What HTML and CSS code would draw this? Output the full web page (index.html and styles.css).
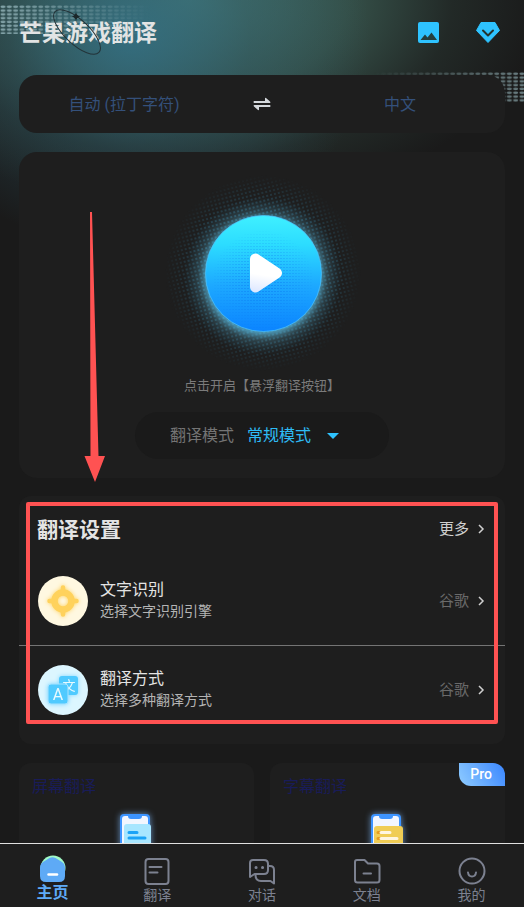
FILE: index.html
```
<!DOCTYPE html>
<html lang="zh-CN">
<head>
    <meta charset="UTF-8">
    <meta name="viewport" content="width=device-width, initial-scale=1.0">
    <link rel="stylesheet" href="styles.css">
    <title>芒果游戏翻译</title>
</head>
<body>
<div class="app">

    <main class="content">
        <!-- halftone decoration -->
        <svg class="dots dots-left" width="150" height="30" aria-hidden="true">
            <defs>
                <pattern id="dot" width="6.3" height="3.8" patternUnits="userSpaceOnUse">
                    <ellipse cx="3" cy="1.7" rx="2.6" ry="1.3" fill="#9fc0c6"/>
                </pattern>
                <linearGradient id="fadeL"><stop offset="0" stop-color="#fff" stop-opacity=".75"/><stop offset="1" stop-color="#fff" stop-opacity="0"/></linearGradient>
                <linearGradient id="fadeR"><stop offset="0" stop-color="#fff" stop-opacity="0"/><stop offset="1" stop-color="#fff" stop-opacity=".6"/></linearGradient>
                <mask id="maskL"><rect width="150" height="30" fill="url(#fadeL)"/></mask>
                <mask id="maskR"><rect width="150" height="30" fill="url(#fadeR)"/></mask>
            </defs>
            <rect width="150" height="29" fill="url(#dot)" mask="url(#maskL)"/>
        </svg>
        <svg class="dots dots-right" width="150" height="30" aria-hidden="true">
            <rect width="150" height="30" fill="url(#dot)" mask="url(#maskR)"/>
        </svg>

        <header class="header">
            <h1>芒果游戏翻译</h1>
            <svg class="orbit" width="60" height="56" viewBox="0 0 60 56" aria-hidden="true">
                <ellipse cx="27" cy="32" rx="30" ry="12" transform="rotate(43 27 32)" fill="none" stroke="#233338"/>
                <path d="M26 12q.6 3.700 4.500 4.500q-3.900.7-4.500 4.500q-.6-3.800-4.500-4.500q3.900-.8 4.500-4.500z" fill="#1b2629"/>
            </svg>
            <div class="actions">
                <button type="button" aria-label="图片翻译">
                    <svg width="21" height="21" viewBox="0 0 21 21">
                        <rect width="21" height="21" rx="2" fill="#2ec3ff"/>
                        <path d="M2.500 18l4.500-5.500 2.500 3 4-5L19 18z" fill="#24403f"/>
                    </svg>
                </button>
                <button type="button" aria-label="会员">
                    <svg width="24" height="21" viewBox="0 0 24 21">
                        <path d="M5 0.500h14L23.500 8.500 12 20.500.500 8.500z" fill="#2ec3ff" stroke="#2ec3ff" stroke-linejoin="round"/>
                        <path d="M7 8.500l5 5 5-5" fill="none" stroke="#24332f" stroke-width="2" stroke-linecap="round" stroke-linejoin="round"/>
                    </svg>
                </button>
            </div>
        </header>

        <section class="languages">
            <button type="button" class="lang">自动 (拉丁字符)</button>
            <button type="button" class="swap" aria-label="交换语言">
                <svg width="18" height="14" viewBox="0 0 18 14" fill="#d4d8dc">
                    <path d="M1 4h11V1.500Q12 .500 13 1l4 3.500q1 1.500-.5 1.500H1q-1-1 0-2zM17 10H6v2.500q0 1-1 .5L1 9.500Q0 8 1.500 8H17q1 1 0 2z"/>
                </svg>
            </button>
            <button type="button" class="lang">中文</button>
        </section>

        <section class="card player">
            <button type="button" class="play" aria-label="开启悬浮翻译">
                <svg width="204" height="204" viewBox="0 0 204 204">
                    <defs>
                        <linearGradient id="ball" x2="0" y2="1">
                            <stop offset="0" stop-color="#3ff0ff"/>
                            <stop offset=".25" stop-color="#2cdcff"/>
                            <stop offset=".6" stop-color="#1da9ff"/>
                            <stop offset="1" stop-color="#0b84ff"/>
                        </linearGradient>
                        <linearGradient id="tri" gradientUnits="userSpaceOnUse" x1="100" y1="84" x2="94" y2="122">
                            <stop offset=".5" stop-color="#fff"/>
                            <stop offset="1" stop-color="#dbe6ff"/>
                        </linearGradient>
                        <radialGradient id="glow">
                            <stop offset=".72" stop-color="#57b4d8" stop-opacity=".75"/>
                            <stop offset=".82" stop-color="#4d8ca3" stop-opacity=".32"/>
                            <stop offset="1" stop-color="#2b6178" stop-opacity="0"/>
                        </radialGradient>
                        <radialGradient id="halo">
                            <stop offset=".58" stop-color="#fff" stop-opacity=".85"/>
                            <stop offset=".75" stop-color="#fff" stop-opacity=".45"/>
                            <stop offset="1" stop-color="#fff" stop-opacity="0"/>
                        </radialGradient>
                        <radialGradient id="core">
                            <stop offset="0" stop-color="#fff"/>
                            <stop offset="1" stop-color="#fff" stop-opacity="0"/>
                        </radialGradient>
                        <pattern id="haloDot" width="4" height="4" patternUnits="userSpaceOnUse" patternTransform="rotate(-14)">
                            <circle cx="2" cy="2" r="1" fill="#34728f"/>
                        </pattern>
                        <pattern id="ballDot" width="3" height="3" patternUnits="userSpaceOnUse">
                            <rect width="2" height="1" fill="#0a76f0"/>
                        </pattern>
                        <mask id="haloMask"><circle cx="103" cy="102" r="98" fill="url(#halo)"/></mask>
                        <mask id="coreMask"><circle cx="103" cy="112" r="54" fill="url(#core)"/></mask>
                    </defs>
                    <circle cx="103" cy="102" r="98" fill="url(#haloDot)" mask="url(#haloMask)"/>
                    <circle cx="103" cy="105" r="79" fill="url(#glow)"/>
                    <circle cx="103.500" cy="102.500" r="58" fill="url(#ball)" stroke="#4cc3ff" stroke-opacity=".7"/>
                    <circle cx="103" cy="110" r="50" fill="url(#ballDot)" mask="url(#coreMask)" opacity=".6"/>
                    <path d="M95.500 88L116.500 102L95.500 116z" fill="url(#tri)" stroke="url(#tri)" stroke-width="11" stroke-linejoin="round"/>
                </svg>
            </button>
            <p class="hint">点击开启【悬浮翻译按钮】</p>
            <div class="mode">
                <label for="mode">翻译模式</label>
                <select id="mode">
                    <option>常规模式</option>
                </select>
                <svg width="12" height="6" viewBox="0 0 12 6" aria-hidden="true"><path d="M0 0h12L6 6z" fill="#2ec3ff"/></svg>
            </div>
            <svg class="arrow" width="22" height="270" viewBox="0 0 22 270" aria-hidden="true">
                <path d="M6 0h2L14.500 244H21L11 270 .500 244H6.500z" fill="#ff5252"/>
            </svg>
        </section>

        <section class="card settings">
            <div class="settings-head">
                <h2>翻译设置</h2>
                <a href="#more" class="more">更多
                    <svg class="chevron" viewBox="0 0 6 10"><path d="M1 1l4 4-4 4"/></svg>
                </a>
            </div>
            <a href="#ocr" class="row">
                <svg class="row-icon" viewBox="0 0 50 50">
                    <circle cx="25" cy="25" r="25" fill="#fff8e1"/>
                    <g class="soft-yellow">
                        <circle cx="25" cy="25" r="8.500" fill="none" stroke="#ffd25c" stroke-width="6.500"/>
                        <path d="M25 11.500v3M25 35.500v3M11.500 25h3M35.500 25h3" stroke="#ffd25c" stroke-width="4.500" stroke-linecap="round"/>
                    </g>
                </svg>
                <span class="row-text">
                    <strong>文字识别</strong>
                    <small>选择文字识别引擎</small>
                </span>
                <span class="value">谷歌</span>
                <svg class="chevron" viewBox="0 0 6 10"><path d="M1 1l4 4-4 4"/></svg>
            </a>
            <a href="#engine" class="row">
                <svg class="row-icon" viewBox="0 0 50 50">
                    <circle cx="25" cy="25" r="25" fill="#dcf6ff"/>
                    <g class="soft-blue">
                        <rect x="21" y="11" width="19" height="19" rx="3" fill="#4fcaff"/>
                        <text x="31" y="25" class="glyph-cn">文</text>
                        <rect x="10" y="19" width="20" height="20" rx="3" fill="#4fcaff" stroke="#a9e3ff"/>
                        <text x="20" y="35" class="glyph-a">A</text>
                    </g>
                </svg>
                <span class="row-text">
                    <strong>翻译方式</strong>
                    <small>选择多种翻译方式</small>
                </span>
                <span class="value">谷歌</span>
                <svg class="chevron" viewBox="0 0 6 10"><path d="M1 1l4 4-4 4"/></svg>
            </a>
            <div class="highlight"></div>
        </section>

        <section class="features">
            <a href="#screen" class="card feature">
                <h3>屏幕翻译</h3>
                <svg class="phone" width="38" height="60" viewBox="0 0 38 60">
                    <rect x="2" y="1" width="30" height="58" rx="4" fill="#3d94ff"/>
                    <path d="M4 6q0-3 3-3h3q0 3 3 3h8q3 0 3-3h3q3 0 3 3v50H4z" fill="#f2f6ff"/>
                    <rect x="6" y="11" width="27" height="40" rx="3" fill="#a8e6ff"/>
                    <path d="M11 19.500h8M11 25h16" stroke="#1ba3f7" stroke-width="3" stroke-linecap="round"/>
                </svg>
            </a>
            <a href="#subtitle" class="card feature">
                <h3>字幕翻译</h3>
                <span class="badge">Pro</span>
                <svg class="phone" width="38" height="60" viewBox="0 0 38 60">
                    <rect x="2" y="1" width="30" height="58" rx="4" fill="#3d94ff"/>
                    <path d="M4 6q0-3 3-3h3q0 3 3 3h8q3 0 3-3h3q3 0 3 3v50H4z" fill="#f2f6ff"/>
                    <rect x="5" y="13" width="29" height="40" rx="3" fill="#f0cd55"/>
                    <path d="M9 19.500h3M9 25.500h3" stroke="#e59c1c" stroke-width="3" stroke-linecap="round"/>
                    <path d="M12 19.500h9M12 25.500h16" stroke="#fff6e0" stroke-width="3" stroke-linecap="round"/>
                </svg>
            </a>
        </section>
    </main>

    <nav class="tabs">
        <a href="#home" class="tab active">
            <svg width="28" height="28" viewBox="0 0 28 28">
                <circle cx="15" cy="13" r="12.500" fill="#a2fbc7"/>
                <path d="M2 13q0-4 3-6l6.500-4q3-1.500 6 0L24 7q3 2 3 6v8q0 6-6 6H8q-6 0-6-6z" fill="#5eaaf6"/>
                <path d="M10.500 19.500h8.500" stroke="#fff" stroke-width="2.500" stroke-linecap="round"/>
            </svg>
            主页
        </a>
        <a href="#translate" class="tab">
            <svg width="28" height="28" viewBox="0 0 28 28" class="line">
                <rect x="2.500" y="2" width="23" height="25" rx="3"/>
                <path d="M6.500 10h12M6.500 15.500h8"/>
            </svg>
            翻译
        </a>
        <a href="#chat" class="tab">
            <svg width="28" height="28" viewBox="0 0 28 28" class="line">
                <path d="M5 3h11q4 0 4 4v6q0 4-4 4H6.500L2 20V6q0-3 3-3zM20 9h2q4 0 4 4v13.500L22.500 24H13q-5.500 0-5.500-6"/>
                <path d="M8 10.500h.1M14.500 10.500h.1" stroke-width="3"/>
            </svg>
            对话
        </a>
        <a href="#docs" class="tab">
            <svg width="28" height="28" viewBox="0 0 28 28" class="line">
                <path d="M4 3h7.500l3.500 3.500h9q2.500 0 2.500 2.500V23q0 2.500-2.500 2.500H4.500Q2 25.500 2 23V5q0-2 2-2z"/>
                <path d="M10.500 16.500h7.500"/>
            </svg>
            文档
        </a>
        <a href="#mine" class="tab">
            <svg width="28" height="28" viewBox="0 0 28 28" class="line">
                <circle cx="14" cy="14" r="12.500"/>
                <path d="M10 15.500q.5 4 4 4t4-4"/>
            </svg>
            我的
        </a>
    </nav>

</div>
</body>
</html>
```
FILE: styles.css
```
* {
    box-sizing: border-box;
}
body {
    margin: 0;
    font-family: Roboto, 'Noto Sans CJK SC', sans-serif;
    background-color: #1a1a1a;
    color: #e4e4e4;
}
h1, h2, h3, p {
    margin: 0;
}
a {
    color: inherit;
    text-decoration: none;
}
button, select {
    border: 0;
    padding: 0;
    background: none;
    font-family: inherit;
    cursor: pointer;
}
svg {
    display: block;
    flex-shrink: 0;
}
.app {
    display: flex;
    flex-direction: column;
    height: 100vh;
}
.content {
    position: relative;
    flex: 1;
    min-height: 0;
    overflow-y: auto;
    scrollbar-width: none;
    padding: 0 19px;
    background:
        radial-gradient(ellipse 240px 210px at 130px 40px, rgba(50, 112, 135, 0.8), rgba(46, 92, 108, 0.4) 50%, transparent),
        radial-gradient(ellipse 350px 210px at 190px 0, #46766f, rgba(62, 98, 88, 0.75) 45%, rgba(46, 64, 58, 0.4) 75%, transparent),
        #1a1a1a;
}

/* Header */
.dots {
    position: absolute;
}
.dots-left {
    top: 5px;
    left: 0;
}
.dots-right {
    top: 72px;
    right: 0;
}
.header {
    position: relative;
    display: flex;
    align-items: center;
    justify-content: space-between;
    height: 75px;
    padding: 0 5px 11px 0;
}
.header h1 {
    padding-top: 3px;
    font-size: 23px;
    line-height: 32px;
    font-weight: 700;
    color: #e2e4e4;
}
.orbit {
    position: absolute;
    left: 31px;
    top: 0;
}
.actions {
    display: flex;
    gap: 37px;
}

/* Languages */
.languages {
    position: relative;
    display: flex;
    align-items: center;
    height: 58px;
    border-radius: 18px;
    background-color: #1e1e1e;
}
.lang {
    flex: 1;
    padding-top: 2px;
    font-size: 16px;
    line-height: 24px;
    color: #34507a;
}
.swap {
    display: flex;
    justify-content: center;
    width: 66px;
}

.card {
    position: relative;
    border-radius: 18px;
    background-color: #1e1e1e;
}

/* Player */
.player {
    display: flex;
    flex-direction: column;
    align-items: center;
    margin-top: 19px;
    padding: 19px 0;
}
.hint {
    padding-top: 1px;
    font-size: 13px;
    line-height: 20px;
    color: #7b7b7b;
}
.mode {
    display: flex;
    align-items: center;
    width: 254px;
    height: 47px;
    margin-top: 16px;
    padding-left: 35px;
    border-radius: 24px;
    background-color: #1a1a1a;
    font-size: 16px;
    line-height: 24px;
    color: #747474;
}
.mode select {
    appearance: none;
    margin: 0 15px 0 13px;
    font-size: 16px;
    line-height: 24px;
    color: #2ebcf5;
}
.arrow {
    position: absolute;
    left: 65px;
    top: 60px;
}

/* Settings */
.settings {
    margin-top: 18px;
    padding: 18px 0 11px;
    border-radius: 12px;
}
.settings-head {
    display: flex;
    align-items: center;
    justify-content: space-between;
    margin-bottom: 11px;
    padding: 0 21px 0 18px;
}
.settings-head h2 {
    font-size: 21px;
    line-height: 32px;
}
.more {
    display: flex;
    align-items: center;
    font-size: 15px;
    line-height: 20px;
    padding-bottom: 2px;
    color: #cfcfcf;
}
.chevron {
    width: 6px;
    height: 10px;
    margin-left: 9px;
    overflow: visible;
    fill: none;
    stroke: #d0d0d0;
    stroke-width: 1.5;
}
.row {
    display: flex;
    align-items: center;
    height: 88px;
    padding: 0 21px 0 19px;
}
.row + .row {
    border-top: 1px solid #747474;
}
.row-icon {
    width: 50px;
    height: 50px;
}
.row-text {
    display: flex;
    flex-direction: column;
    flex: 1;
    margin-left: 12px;
    padding-bottom: 2px;
}
.row-text strong {
    font-size: 16px;
    line-height: 22px;
    font-weight: 400;
}
.row-text small {
    font-size: 14px;
    line-height: 20px;
    color: #b4b4b4;
}
.value {
    font-size: 15px;
    line-height: 20px;
    color: #6a6a6a;
}
.soft-yellow {
    filter: drop-shadow(0 0 2px #ffd25c);
}
.soft-blue {
    filter: drop-shadow(0 0 2px #7fd6ff);
}
.glyph-cn {
    font-size: 13px;
    fill: #e8faff;
    text-anchor: middle;
}
.glyph-a {
    font-size: 16px;
    fill: #e8faff;
    text-anchor: middle;
}
.highlight {
    position: absolute;
    inset: 6px 7px 20px;
    border: 4px solid #ff5252;
    border-radius: 2px;
    pointer-events: none;
}

/* Features */
.features {
    display: grid;
    grid-template-columns: 1fr 1fr;
    gap: 16px;
    margin-top: 19px;
    padding-bottom: 19px;
}
.feature {
    height: 130px;
    padding: 12px 13px;
    border-radius: 12px;
}
.feature h3 {
    font-size: 16px;
    line-height: 24px;
    font-weight: 400;
    color: #191c58;
}
.phone {
    margin: 14px auto 0;
    filter: drop-shadow(0 0 3px rgba(130, 190, 255, 0.7));
}
.badge {
    position: absolute;
    top: 0;
    right: 0;
    padding: 0 13px 0 11px;
    border-radius: 0 12px 0 12px;
    background: linear-gradient(60deg, #8fccff, #3a86ff);
    font-size: 14px;
    line-height: 23px;
    font-weight: 500;
    color: #fff;
}

/* Bottom tabs */
.tabs {
    display: flex;
    height: 64px;
    padding-top: 13px;
    border-top: 1px solid #e0e0e0;
    background-color: #1e1e1e;
}
.tab {
    display: flex;
    flex: 1;
    flex-direction: column;
    align-items: center;
    font-size: 14px;
    line-height: 20px;
    color: #7c8190;
}
.tab.active {
    margin-top: -2px;
    font-size: 16px;
    font-weight: 700;
    color: #5eaaf6;
}
.line {
    fill: none;
    stroke: #7c8190;
    stroke-width: 2;
    stroke-linecap: round;
    stroke-linejoin: round;
}
```
